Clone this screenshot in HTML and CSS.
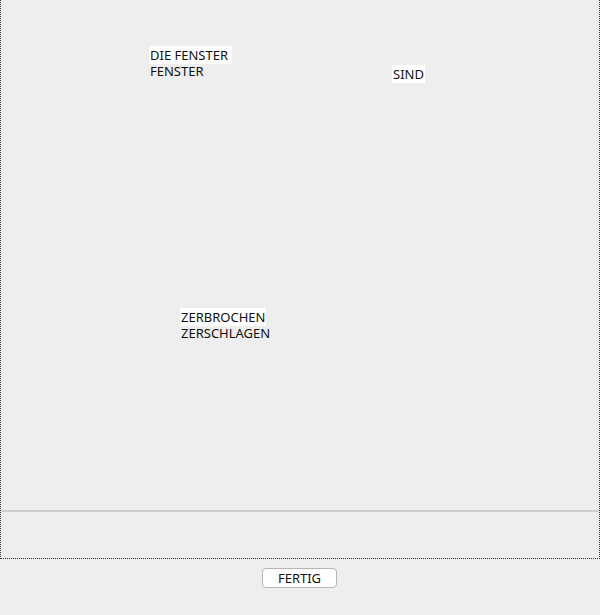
FILE: index.html
```html
<!DOCTYPE html>
<html lang="de">
<head>
    <meta charset="UTF-8">
    <title>Fenster</title>
    <link rel="stylesheet" href="styles.css">
</head>
<body>
    <div class="frame">
        <!-- Word canvas -->
        <div class="canvas">
            <div class="word-group group-fenster">
                <span class="chip">DIE FENSTER&nbsp;</span>
                <span class="alt">FENSTER</span>
            </div>
            <div class="word-group group-sind">
                <span class="chip">SIND</span>
            </div>
            <div class="word-group group-zerbrochen">
                <span class="chip">ZERBROCHEN</span>
                <span class="alt">ZERSCHLAGEN</span>
            </div>
        </div>
        <div class="tray"></div>
    </div>
    <div class="actions">
        <button class="btn">FERTIG</button>
    </div>
</body>
</html>
```

FILE: styles.css
```css
body {
    margin: 0;
    background-color: #eeeeee;
    font-family: "Noto Sans", "Open Sans", sans-serif;
    font-size: 13px;
    color: #111;
}

.frame {
    width: 598px;
    border-left: 1px dotted #333;
    border-right: 1px dotted #333;
    border-bottom: 1px dotted #333;
}

.canvas {
    position: relative;
    height: 510px;
    border-bottom: 2px solid #cdcbcb;
}

.tray {
    height: 46px;
}

.word-group {
    position: absolute;
    display: flex;
    flex-direction: column;
    align-items: flex-start;
}

.group-fenster {
    left: 148px;
    top: 46px;
}

.group-sind {
    left: 391px;
    top: 65px;
}

.group-zerbrochen {
    left: 179px;
    top: 308px;
}

.chip {
    background-color: #fff;
    padding: 1px;
    line-height: 16px;
}

.alt {
    padding: 0 1px;
    line-height: 14px;
}

.actions {
    display: flex;
    justify-content: center;
    padding-top: 9px;
}

.btn {
    font-family: "Noto Sans", "Open Sans", sans-serif;
    font-size: 13px;
    color: #111;
    background-color: #fff;
    border: 1px solid #b5b5b5;
    border-radius: 4px;
    width: 75px;
    height: 20px;
    padding: 0;
    margin-left: -1px;
}
```
